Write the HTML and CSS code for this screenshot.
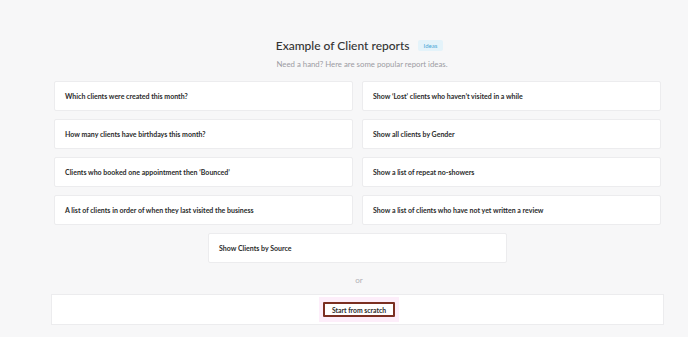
FILE: index.html
```html
<!DOCTYPE html>
<html lang="en">
<head>
    <meta charset="UTF-8">
    <meta name="viewport" content="width=device-width, initial-scale=1.0">
    <title>Client reports</title>
    <link rel="stylesheet" href="styles.css">
</head>
<body>

<div class="page">
    <header class="intro">
        <h1>Example of Client reports <span class="badge">Ideas</span></h1>
        <p>Need a hand? Here are some popular report ideas.</p>
    </header>

    <div class="ideas">
        <div class="idea">Which clients were created this month?</div>
        <div class="idea">Show ‘Lost’ clients who haven’t visited in a while</div>
        <div class="idea">How many clients have birthdays this month?</div>
        <div class="idea">Show all clients by Gender</div>
        <div class="idea">Clients who booked one appointment then ‘Bounced’</div>
        <div class="idea">Show a list of repeat no-showers</div>
        <div class="idea">A list of clients in order of when they last visited the business</div>
        <div class="idea">Show a list of clients who have not yet written a review</div>
        <div class="idea single">Show Clients by Source</div>
    </div>

    <div class="divider">or</div>

    <div class="scratch">
        <span class="scratch-focus"><button class="scratch-btn">Start from scratch</button></span>
    </div>
</div>

</body>
</html>
```

FILE: styles.css
```css
body {
    margin: 0;
    padding: 0;
    background-color: #f7f7f8;
    font-family: Lato, "Noto Sans", Arial, sans-serif;
    color: #333;
}
.page {
    width: 613px;
    margin: 0 0 0 51px;
    padding-top: 37px;
}
.intro {
    text-align: center;
    padding-left: 4px;
}
.intro h1 {
    margin: 0;
    font-size: 12px;
    font-weight: 500;
    color: #333;
    line-height: 18px;
}
.badge {
    display: inline-block;
    vertical-align: middle;
    margin-left: 5px;
    padding: 0 6px;
    height: 11px;
    line-height: 11px;
    font-size: 6px;
    font-weight: 400;
    color: #4aa6d6;
    background-color: #e4f3fa;
    border-radius: 2px;
    position: relative;
    top: -1px;
}
.intro p {
    margin: 3px 0 0;
    font-size: 7.8px;
    color: #9c9ca3;
    line-height: 12px;
    padding-left: 5px;
}
.ideas {
    display: grid;
    grid-template-columns: 299px 299px;
    column-gap: 9px;
    row-gap: 8px;
    width: 607px;
    margin: 11px auto 0;
}
.idea {
    height: 30px;
    box-sizing: border-box;
    padding: 0 10px;
    display: flex;
    align-items: center;
    background-color: white;
    border: 1px solid #ececee;
    border-radius: 2px;
    font-size: 7px;
    font-weight: 700;
    color: #2b2b2b;
}
.idea.single {
    grid-column: 1 / 3;
    justify-self: center;
    width: 299px;
}
.divider {
    text-align: center;
    font-size: 8px;
    color: #b0b0b4;
    line-height: 12px;
    margin: 11px 0 8px;
    padding-left: 3px;
}
.scratch {
    height: 31px;
    box-sizing: border-box;
    background-color: white;
    border: 1px solid #ececee;
    display: flex;
    justify-content: center;
    align-items: center;
    padding-left: 3px;
}
.scratch-focus {
    display: flex;
    align-items: center;
    justify-content: center;
    padding: 5px 4px;
    background-color: #fdeefa;
}
.scratch-btn {
    font-family: inherit;
    font-size: 6.8px;
    font-weight: 700;
    color: #2b2b2b;
    background-color: white;
    border: 2px solid #7b2f22;
    border-radius: 1px;
    height: 15px;
    padding: 0 7px;
    cursor: pointer;
}
```
